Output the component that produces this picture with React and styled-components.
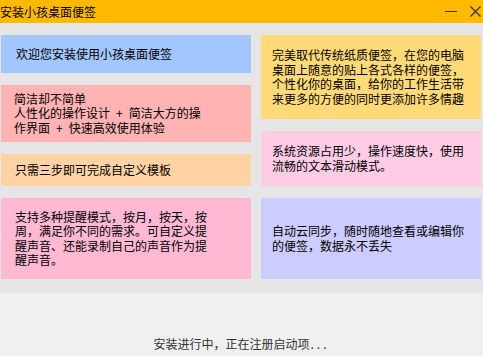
import React from "react";
import styled, { createGlobalStyle } from "styled-components";

const GlobalStyle = createGlobalStyle`
  html, body {
    margin: 0;
    padding: 0;
    background: #f0f0f0;
  }
  body {
    font-family: "Noto Sans CJK SC", "Liberation Sans", sans-serif;
    font-size: 12px;
  }
`;

export default function App() {
  const left = [
    { bg: "#a4c6ff", h: 38, pad: 15, text: "欢迎您安装使用小孩桌面便签" },
    { bg: "#ffb3b3", h: 57, pad: 13, text: "简洁却不简单\n人性化的操作设计\u2002+\u2002简洁大方的操作界面\u2002+\u2002快速高效使用体验" },
    { bg: "#ffd3a3", h: 32, pad: 14, text: "只需三步即可完成自定义模板" },
    { bg: "#ffb9d3", h: 81, pad: 14, text: "支持多种提醒模式，按月，按天，按周，满足你不同的需求。可自定义提醒声音、还能录制自己的声音作为提醒声音。" },
  ];
  const right = [
    { bg: "#ffda77", h: 84, pad: 11, text: "完美取代传统纸质便签，在您的电脑桌面上随意的贴上各式各样的便签，个性化你的桌面，给你的工作生活带来更多的方便的同时更添加许多情趣" },
    { bg: "#ffcce6", h: 55, pad: 11, text: "系统资源占用少，操作速度快，使用流畅的文本滑动模式。" },
    { bg: "#ccccff", h: 81, pad: 11, text: "自动云同步，随时随地查看或编辑你的便签，数据永不丢失" },
  ];

  return (
    <Window>
      <GlobalStyle />
      <TitleBar>
        <Title>安装小孩桌面便签</Title>
        <Controls>
          <MinButton />
          <CloseButton>
            <svg width="11" height="11" viewBox="0 0 11 11">
              <path d="M0.5 0.5 L10.5 10.5 M10.5 0.5 L0.5 10.5" stroke="#3a3a3a" strokeWidth="1.4" fill="none" />
            </svg>
          </CloseButton>
        </Controls>
      </TitleBar>
      <Content>
        <Column $width={250}>
          {left.map((c, i) => (
            <Card key={i} $bg={c.bg} $h={c.h} $pad={c.pad}>
              <CardText>{c.text}</CardText>
            </Card>
          ))}
        </Column>
        <Column $width={220}>
          {right.map((c, i) => (
            <Card key={i} $bg={c.bg} $h={c.h} $pad={c.pad}>
              <CardText>{c.text}</CardText>
            </Card>
          ))}
        </Column>
      </Content>
      <Footer>
        安装进行中，正在注册启动项<Dots>...</Dots>
      </Footer>
    </Window>
  );
}

const Window = styled.div`
  width: 483px;
  height: 356px;
  display: flex;
  flex-direction: column;
  background: #f0f0f0;
  overflow: hidden;
`;

const TitleBar = styled.div`
  height: 23px;
  background: #ffba00;
  display: flex;
  align-items: center;
  justify-content: space-between;
  padding: 0 2px 0 0;
`;

const Title = styled.div`
  font-size: 12px;
  color: #000;
  line-height: 23px;
`;

const Controls = styled.div`
  display: flex;
  align-items: center;
  gap: 13px;
`;

const MinButton = styled.div`
  width: 12px;
  height: 1px;
  background: #3a3a3a;
`;

const CloseButton = styled.div`
  width: 11px;
  height: 11px;
  display: flex;
`;

const Content = styled.div`
  background: #e6e6e6;
  display: flex;
  gap: 10px;
  padding: 12px 2px 14px 1px;
`;

const Column = styled.div`
  width: ${({ $width }) => $width}px;
  display: flex;
  flex-direction: column;
  gap: 12px;
`;

const Card = styled.div`
  height: ${({ $h }) => $h}px;
  background: ${({ $bg }) => $bg};
  padding-left: ${({ $pad }) => $pad}px;
  display: flex;
  align-items: center;
`;

const CardText = styled.div`
  width: 192px;
  font-size: 12px;
  line-height: 14.5px;
  color: #000;
  white-space: pre-line;
  word-break: break-all;
`;

const Footer = styled.div`
  flex: 1;
  display: flex;
  align-items: flex-end;
  justify-content: center;
  padding: 0 0 5px 0;
  font-size: 12px;
  color: #333;
  line-height: 14px;
`;

const Dots = styled.span`
  letter-spacing: 3px;
  padding-left: 1px;
`;
